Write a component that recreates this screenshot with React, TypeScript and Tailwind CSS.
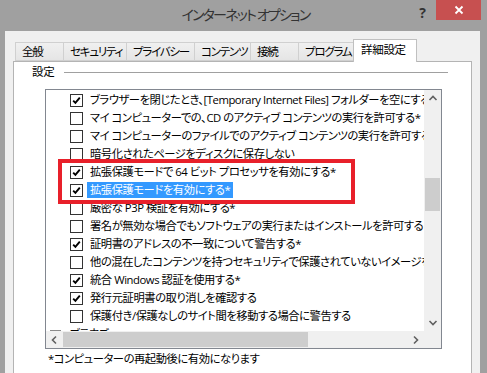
import React from 'react';

type Row = { checked: boolean; text: string; selected?: boolean };

const rows: Row[] = [
  { checked: true, text: 'ブラウザーを閉じたとき、[Temporary Internet Files] フォルダーを空にする' },
  { checked: false, text: 'マイ コンピューターでの、CD のアクティブ コンテンツの実行を許可する*' },
  { checked: false, text: 'マイ コンピューターのファイルでのアクティブ コンテンツの実行を許可する*' },
  { checked: false, text: '暗号化されたページをディスクに保存しない' },
  { checked: true, text: '拡張保護モードで 64 ビット プロセッサを有効にする*' },
  { checked: true, text: '拡張保護モードを有効にする*', selected: true },
  { checked: false, text: '厳密な P3P 検証を有効にする*' },
  { checked: false, text: '署名が無効な場合でもソフトウェアの実行またはインストールを許可する' },
  { checked: true, text: '証明書のアドレスの不一致について警告する*' },
  { checked: false, text: '他の混在したコンテンツを持つセキュリティで保護されていないイメージをブロックする' },
  { checked: true, text: '統合 Windows 認証を使用する*' },
  { checked: true, text: '発行元証明書の取り消しを確認する' },
  { checked: false, text: '保護付き/保護なしのサイト間を移動する場合に警告する' },
];

const tabs = [
  { label: '全般', w: 'w-[49px]' },
  { label: 'セキュリティ', w: 'w-[64px]' },
  { label: 'プライバシー', w: 'w-[69px]' },
  { label: 'コンテンツ', w: 'w-[57px]' },
  { label: '接続', w: 'w-[49px]' },
  { label: 'プログラム', w: 'w-[56px]' },
];

function CheckBox({ checked }: { checked: boolean }) {
  return (
    <div className="w-[13px] h-[13px] border border-[#333333] bg-white shrink-0 flex items-center justify-center">
      {checked && (
        <svg width="11" height="11" viewBox="0 0 11 11">
          <path d="M2.2 5.6 L4.4 7.9 L8.8 2.6" fill="none" stroke="#000" strokeWidth="1.9" />
        </svg>
      )}
    </div>
  );
}

function Chevron({ dir }: { dir: 'up' | 'down' | 'left' | 'right' }) {
  const d = {
    up: 'M1.5 6 L5 2.5 L8.5 6',
    down: 'M1.5 3 L5 6.5 L8.5 3',
    left: 'M6 1.5 L2.5 5 L6 8.5',
    right: 'M3 1.5 L6.5 5 L3 8.5',
  }[dir];
  return (
    <svg width="10" height="10" viewBox="0 0 10 10">
      <path d={d} fill="none" stroke="#606060" strokeWidth="1.6" />
    </svg>
  );
}

export default function App() {
  return (
    <div
      className="relative w-[487px] h-[373px] overflow-hidden bg-[#a0a0a0] flex flex-col text-black"
      style={{ fontFamily: "'Open Sans', 'Noto Sans CJK JP', sans-serif", fontFeatureSettings: '"palt" 1' }}
    >
      {/* Title bar */}
      <div className="h-[31px] grid grid-cols-[1fr_auto_1fr] shrink-0">
        <div />
        <div className="text-[14px] tracking-[-1.8px] leading-[30px] text-[#333333] pl-[4px]">インターネット オプション</div>
        <div className="flex justify-end items-start pr-[6px]">
          <span className="text-[14px] font-bold text-[#333333] leading-[24px] mr-[10px] mt-[1px]">?</span>
          <button className="w-[45px] h-[20px] bg-[#c75050] flex items-center justify-center">
            <svg width="10" height="10" viewBox="0 0 10 10">
              <path d="M1.5 1.5 L8.5 8.5 M8.5 1.5 L1.5 8.5" stroke="#fff" strokeWidth="1.8" />
            </svg>
          </button>
        </div>
      </div>

      {/* Dialog body */}
      <div className="flex-1 ml-[5px] mr-[7px] bg-[#f0f0f0] flex flex-col">
        {/* Tabs */}
        <div className="flex items-end h-[31px] pl-[10px] relative z-10 -mb-px">
          {tabs.map((t) => (
            <div
              key={t.label}
              className={`${t.w} h-[19px] mb-px border border-[#d0d0d0] -ml-px first:ml-0 bg-gradient-to-b from-[#f0f0f0] to-[#e5e5e5] text-[11.5px] tracking-[-1.2px] leading-[17px] pl-[6px] whitespace-nowrap`}
            >
              {t.label}
            </div>
          ))}
          <div className="w-[64px] h-[23px] border border-[#c0c0c0] border-b-0 bg-white text-[11.5px] tracking-[-0.3px] leading-[20px] pl-[7px] -ml-px">
            詳細設定
          </div>
        </div>

        {/* Tab panel */}
        <div className="ml-[8px] w-[459px] flex-1 border border-[#b4b4b4] border-b-0 bg-white flex flex-col">
          <div className="h-[20px] flex items-center pl-[18px] pr-[23px]">
            <span className="text-[11.5px] tracking-[-0.3px] leading-[16px]">設定</span>
            <div className="flex-1 h-px bg-[#a0a0a0] ml-[10px]" />
          </div>

          {/* List box */}
          <div className="mt-[7px] ml-[31px] w-[397px] h-[260px] border border-[#828790] flex flex-col">
            <div className="flex h-[241px]">
              <div className="flex-1 overflow-hidden pt-[1px]">
                {rows.map((r, i) => (
                  <div key={i} className="h-[18px] flex items-center pl-[24px] whitespace-nowrap">
                    <CheckBox checked={r.checked} />
                    <span
                      className={`ml-[4px] px-[3px] text-[11.3px] tracking-[-0.45px] leading-[16px] ${
                        r.selected ? 'bg-[#3399ff] text-white' : ''
                      }`}
                    >
                      {r.text}
                    </span>
                  </div>
                ))}
                <div className="h-[18px] flex items-center pl-[4px] whitespace-nowrap">
                  <div className="w-[11px] h-[9px] border border-[#8a8a8a] bg-[#e6e6e6] flex flex-col justify-center gap-[1px] px-[2px]">
                    <div className="h-px bg-[#8a8a8a]" />
                    <div className="h-px bg-[#8a8a8a]" />
                  </div>
                  <span className="ml-[9px] text-[11.3px] tracking-[-0.45px] leading-[16px]">ブラウズ</span>
                </div>
              </div>
              {/* Vertical scrollbar */}
              <div className="w-[17px] bg-[#f0f0f0] flex flex-col">
                <div className="h-[17px] flex items-center justify-center"><Chevron dir="up" /></div>
                <div className="flex-1 pt-[71px]">
                  <div className="mx-[1px] h-[33px] bg-[#cdcdcd]" />
                </div>
                <div className="h-[17px] flex items-center justify-center"><Chevron dir="down" /></div>
              </div>
            </div>
            {/* Horizontal scrollbar */}
            <div className="h-[17px] flex bg-[#f0f0f0]">
              <div className="w-[17px] flex items-center justify-center"><Chevron dir="left" /></div>
              <div className="flex-1 py-[1px]">
                <div className="w-[245px] h-full bg-[#cdcdcd]" />
              </div>
              <div className="w-[17px] flex items-center justify-center"><Chevron dir="right" /></div>
              <div className="w-[17px] bg-[#f0f0f0]" />
            </div>
          </div>

          <div className="mt-[1px] pl-[34px] text-[11.3px] tracking-[-0.45px] leading-[18px]">*コンピューターの再起動後に有効になります</div>
        </div>
      </div>

      {/* Red annotation box */}
      <div className="absolute left-[58px] top-[159px] w-[297px] h-[45px] border-[4px] border-[#e8202a] pointer-events-none" />
    </div>
  );
}
